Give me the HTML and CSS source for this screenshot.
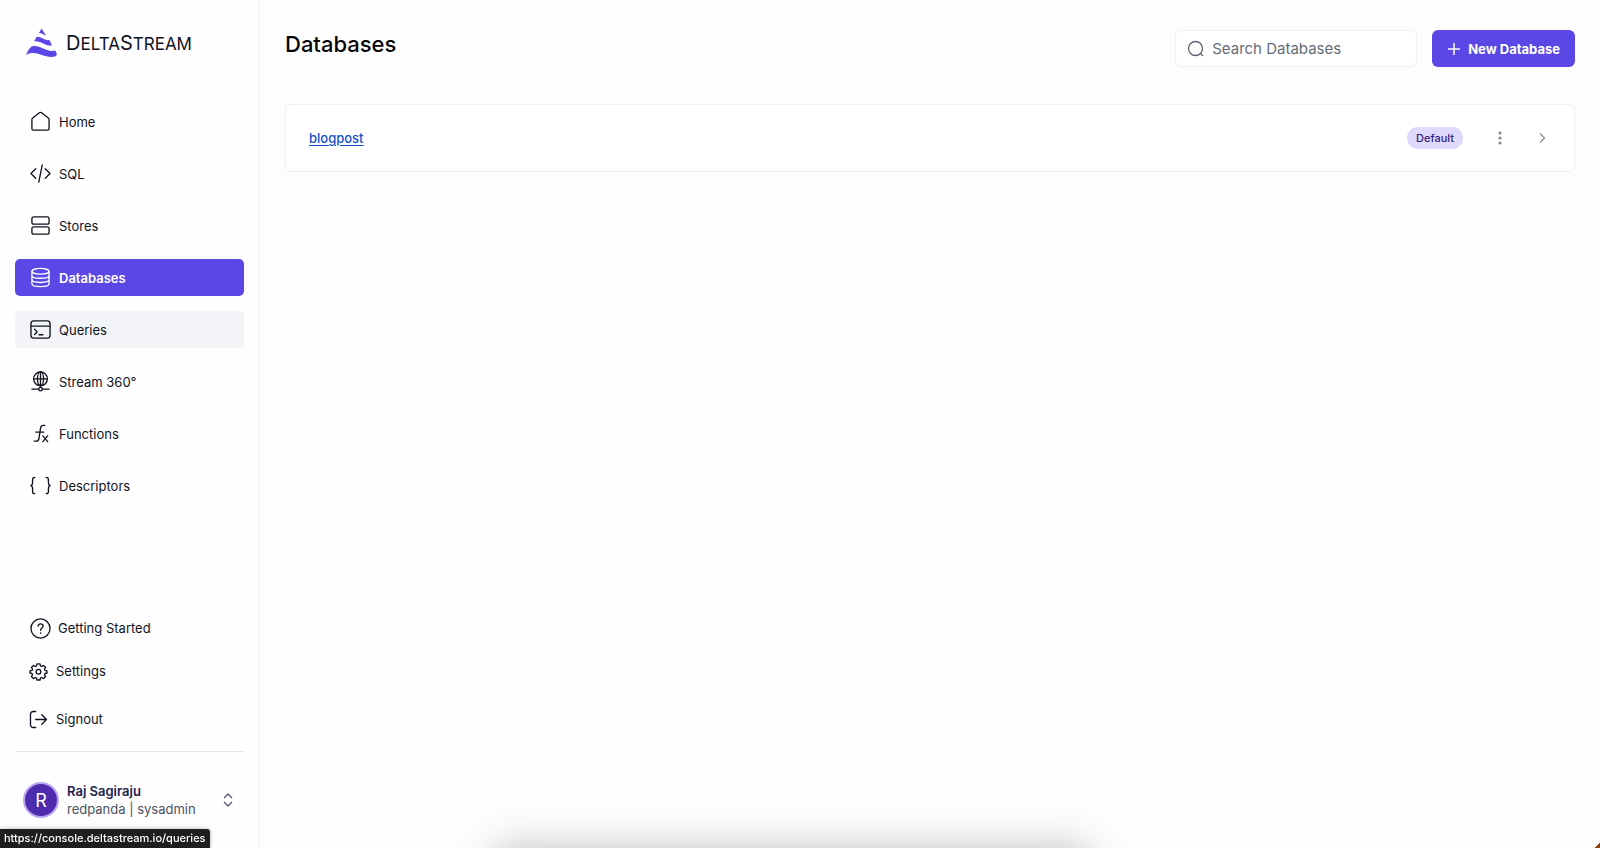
FILE: index.html
```html
<!DOCTYPE html>
<html lang="en">
<head>
    <meta charset="UTF-8">
    <meta name="viewport" content="width=device-width, initial-scale=1.0">
    <title>DeltaStream - Databases</title>
    <link rel="stylesheet" href="styles.css">
</head>
<body>

<aside class="sidebar">
    <a class="logo" href="#">
        <svg width="32" height="30" viewBox="0 0 32 30" fill="#5b47e5">
            <path d="M15.500 0.500L20 7.500C17.500 7 16 5 13 5Z"/>
            <path d="M10.500 9C15 8 18 13 23.500 12L26 17.500C19 18.500 14.500 12 8 13.500Z"/>
            <path d="M5.500 18.500C14 16 20 25 29 22.500C31 24.500 31.500 28 29 28.500C18 31 10 21 0 27C1.500 23.500 3 20.500 5.500 18.500Z"/>
        </svg>
        <span class="logo-text"><span class="cap">D</span>ELTA<span class="cap">S</span>TREAM</span>
    </a>

    <nav class="nav">
        <a class="nav-item" href="#">
            <svg class="icon" viewBox="0 0 22 22"><path d="M2 9v9.500a1.500 1.500 0 0 0 1.500 1.500h15a1.500 1.500 0 0 0 1.500-1.500V9a2 2 0 0 0-.8-1.600l-7-5.500a2 2 0 0 0-2.400 0l-7 5.500A2 2 0 0 0 2 9z"/></svg>
            Home
        </a>
        <a class="nav-item" href="#">
            <svg class="icon" viewBox="0 0 22 22"><path d="M6 6l-5 5 5 5M16 6l5 5-5 5M12.800 2L9.200 20"/></svg>
            SQL
        </a>
        <a class="nav-item" href="#">
            <svg class="icon" viewBox="0 0 22 22"><rect x="2" y="2" width="18" height="7.500" rx="2"/><rect x="2" y="12.500" width="18" height="7.500" rx="2"/></svg>
            Stores
        </a>
        <a class="nav-item active" href="#">
            <svg class="icon" viewBox="0 0 22 22"><ellipse cx="11" cy="4.500" rx="9" ry="3"/><path d="M2 4.500v13c0 1.700 4 3 9 3s9-1.300 9-3v-13M2 8.800c0 1.700 4 3 9 3s9-1.300 9-3M2 13.200c0 1.700 4 3 9 3s9-1.300 9-3"/></svg>
            Databases
        </a>
        <a class="nav-item hover" href="#">
            <svg class="icon" viewBox="0 0 22 22"><rect x="1" y="2" width="20" height="18" rx="3"/><path d="M1 7.500h20M4.800 10.800l2.700 2.700-2.700 2.700M9.500 16.500h4"/></svg>
            Queries
        </a>
        <a class="nav-item" href="#">
            <svg class="icon" viewBox="0 0 22 22"><circle cx="11" cy="8.200" r="7.200"/><ellipse cx="11" cy="8.200" rx="3.200" ry="7.200"/><path d="M11 1v16M3.800 8.200h14.400M2 19h7M13 19h7"/><circle cx="11" cy="19" r="1.900"/></svg>
            Stream 360°
        </a>
        <a class="nav-item" href="#">
            <svg class="icon" viewBox="0 0 22 22"><path d="M15.500 2.500h-1.500c-2 0-2.700 1-3 3L9.500 15.500c-.3 2.200-1 3.500-3 3.500H4.500M6 9.500h8.500M13.500 13.500l5 6M18.500 13.500l-5 6"/></svg>
            Functions
        </a>
        <a class="nav-item" href="#">
            <svg class="icon" viewBox="0 0 22 22"><path d="M5 2.500c-1.700 0-2.300.8-2.300 2.300v3.200c0 1.700-.4 2.600-1.700 3 1.300.4 1.700 1.300 1.700 3v3.200c0 1.500.6 2.300 2.300 2.300M17 2.500c1.700 0 2.300.8 2.300 2.300v3.200c0 1.700.4 2.600 1.700 3-1.300.4-1.700 1.300-1.700 3v3.200c0 1.500-.6 2.300-2.300 2.300"/></svg>
            Descriptors
        </a>
    </nav>

    <div class="bottom-links">
        <a class="bottom-item help" href="#">
            <svg class="icon" viewBox="0 0 22 22"><circle cx="11" cy="11" r="10"/><path d="M8.500 8.500c.2-1.500 1.200-2.300 2.600-2.300 1.500 0 2.600.9 2.600 2.300 0 2-2.600 2-2.600 4.300M11.100 15.700v.4"/></svg>
            Getting Started
        </a>
        <a class="bottom-item" href="#">
            <svg class="icon small" viewBox="0 0 18 18"><path d="M7.400 1h3.200l.5 2.100 1.300.6 1.900-1.200 2.200 2.200-1.200 1.900.6 1.300 2.100.5v2.200l-2.100.5-.6 1.300 1.200 1.900-2.200 2.200-1.900-1.200-1.300.6-.5 2.100H7.400l-.5-2.100-1.300-.6-1.900 1.200-2.200-2.200 1.200-1.900-.6-1.300L0 10.600V8.400l2.100-.5.6-1.300-1.200-1.900 2.200-2.200 1.900 1.200 1.300-.6z"/><circle cx="9" cy="9.300" r="2.500"/></svg>
            Settings
        </a>
        <a class="bottom-item" href="#">
            <svg class="icon small" viewBox="0 0 18 18"><path d="M6 .5H3.500a3 3 0 0 0-3 3v11a3 3 0 0 0 3 3H6M6 9h11.500M12.500 4l5 5-5 5"/></svg>
            Signout
        </a>
    </div>

    <button class="user" type="button">
        <span class="avatar">R</span>
        <span class="user-info">
            <strong>Raj Sagiraju</strong>
            <span>redpanda | sysadmin</span>
        </span>
        <svg class="updown" width="10" height="14" viewBox="0 0 10 14"><path d="M1 5l4-4 4 4M1 9l4 4 4-4"/></svg>
    </button>
</aside>

<main class="content">
    <header class="page-header">
        <h1>Databases</h1>
        <div class="search">
            <svg width="16" height="16" viewBox="0 0 16 16"><circle cx="7.500" cy="7.500" r="7"/><path d="M12.500 12.500l2.500 2.500"/></svg>
            <input type="text" placeholder="Search Databases" aria-label="Search Databases">
        </div>
        <button class="new-btn" type="button">
            <svg width="14" height="14" viewBox="0 0 14 14"><path d="M7 1v12M1 7h12"/></svg>
            New Database
        </button>
    </header>

    <div class="db-card">
        <a class="db-name" href="#">blogpost</a>
        <span class="badge">Default</span>
        <button class="icon-btn" type="button" aria-label="More options">
            <svg width="4" height="14" viewBox="0 0 4 14" fill="#8b8d93"><circle cx="2" cy="2" r="1.600"/><circle cx="2" cy="7" r="1.600"/><circle cx="2" cy="12" r="1.600"/></svg>
        </button>
        <button class="icon-btn" type="button" aria-label="Open">
            <svg width="6" height="10" viewBox="0 0 6 10"><path d="M1 .5L5.500 5 1 9.500" fill="none" stroke="#8b8d93" stroke-width="1.300"/></svg>
        </button>
    </div>
</main>

<div class="status-url">https://console.deltastream.io/queries</div>
<div class="dock-shadow"></div>
<div class="corner"></div>

</body>
</html>
```
FILE: styles.css
```css
* {
    box-sizing: border-box;
}
body {
    display: flex;
    min-height: 100vh;
    margin: 0;
    overflow: hidden;
    font-family: Inter, sans-serif;
    font-size: 13px;
    color: #10121f;
    background: #fdfdfd;
}
a {
    color: inherit;
    text-decoration: none;
}
button {
    font: inherit;
    border: none;
    background: none;
    padding: 0;
    cursor: pointer;
}

/* sidebar */
.sidebar {
    display: flex;
    flex-direction: column;
    flex: none;
    width: 260px;
    padding: 28px 14px 28px 15px;
    border-right: 2px solid #f6f6f7;
    background: #fefefe;
}
.logo {
    display: flex;
    align-items: center;
    gap: 8px;
    height: 30px;
    padding-left: 11px;
    margin-bottom: 45px;
}
.logo-text {
    font-size: 17px;
    line-height: 24px;
}
.cap {
    font-size: 20px;
}
.nav {
    display: flex;
    flex-direction: column;
    gap: 15px;
}
.nav-item {
    display: flex;
    align-items: center;
    gap: 8px;
    height: 37px;
    padding: 0 15px;
    border-radius: 5px;
}
.nav-item.active {
    background: #5b47e5;
    color: #fff;
    font-weight: 600;
}
.nav-item.hover {
    background: #f2f4f7;
}
.icon {
    width: 21px;
    height: 21px;
    fill: none;
    stroke: currentColor;
    stroke-width: 1.4;
    stroke-linecap: round;
    stroke-linejoin: round;
    overflow: visible;
}
.icon.small {
    width: 17px;
    height: 17px;
}
.bottom-links {
    display: flex;
    flex-direction: column;
    margin-top: auto;
    padding: 0 0 8px 15px;
    border-bottom: 1px solid #e6e7ea;
}
.bottom-item {
    display: flex;
    align-items: center;
    gap: 9px;
    height: 48px;
}
.bottom-item.help {
    gap: 7px;
    height: 38px;
}
.user {
    display: flex;
    align-items: center;
    height: 40px;
    margin-top: 28px;
    padding: 0 11px 0 8px;
    text-align: left;
}
.avatar {
    display: flex;
    align-items: center;
    justify-content: center;
    width: 36px;
    height: 36px;
    margin-right: 8px;
    border: 2px solid #b9a5f2;
    border-radius: 50%;
    background: #4f2cad;
    color: #fff;
    font-size: 18px;
}
.user-info {
    display: flex;
    flex: 1;
    flex-direction: column;
    line-height: 18px;
    color: #4b5263;
}
.user-info strong {
    font-weight: 600;
    color: #1d2250;
}
.updown {
    fill: none;
    stroke: #5a6078;
    stroke-width: 1.4;
}

/* main area */
.content {
    flex: 1;
    padding: 30px 25px 0;
}
.page-header {
    display: flex;
    gap: 15px;
    margin-bottom: 37px;
}
h1 {
    flex: 1;
    margin: 0;
    font-size: 22px;
    font-weight: 500;
    line-height: 28px;
    color: #050505;
}
.search {
    display: flex;
    align-items: center;
    gap: 8px;
    width: 242px;
    height: 37px;
    padding: 0 12px;
    border: 1px solid #f0f0f2;
    border-radius: 6px;
    background: #fff;
}
.search svg {
    flex: none;
    fill: none;
    stroke: #5a5f6c;
    stroke-width: 1.3;
    overflow: visible;
}
.search input {
    width: 100%;
    padding: 0;
    border: none;
    outline: none;
    background: none;
    font: inherit;
    font-size: 15px;
}
.search input::placeholder {
    color: #666b78;
    opacity: 1;
}
.new-btn {
    display: flex;
    align-items: center;
    gap: 7px;
    height: 37px;
    padding: 0 15px;
    border-radius: 6px;
    background: #5b47e5;
    color: #fff;
    font-weight: 700;
}
.new-btn svg {
    stroke: #fff;
    stroke-width: 1.5;
}
.db-card {
    display: flex;
    align-items: center;
    height: 68px;
    padding: 0 21px 0 23px;
    border: 1px solid #efeff1;
    border-radius: 6px;
    background: #fff;
}
.db-name {
    color: #1550cc;
    font-weight: 500;
    text-decoration: underline;
    text-underline-offset: 2px;
}
.badge {
    margin: 0 26px 0 auto;
    padding: 0 9px;
    border-radius: 11px;
    background: #dfdafb;
    color: #321c85;
    font-size: 11px;
    font-weight: 500;
    line-height: 22px;
}
.icon-btn {
    display: flex;
    align-items: center;
    justify-content: center;
    width: 22px;
    height: 22px;
}
.icon-btn + .icon-btn {
    margin-left: 20px;
}

/* overlays */
.status-url {
    position: fixed;
    left: 0;
    bottom: 0;
    padding: 0 4px;
    border-radius: 0 3px 0 0;
    background: #1d1e20;
    box-shadow: 0 0 4px rgba(0, 0, 0, 0.3);
    color: #fff;
    font-size: 11px;
    font-weight: 500;
    line-height: 19px;
}
.dock-shadow {
    position: fixed;
    left: 31%;
    right: 32%;
    bottom: -40px;
    height: 38px;
    box-shadow: 0 0 40px rgba(0, 0, 0, 0.28);
}
.corner {
    position: fixed;
    right: 0;
    bottom: 0;
    width: 7px;
    height: 6px;
    background: linear-gradient(135deg, transparent 55%, #8a4312 60%);
}
```
